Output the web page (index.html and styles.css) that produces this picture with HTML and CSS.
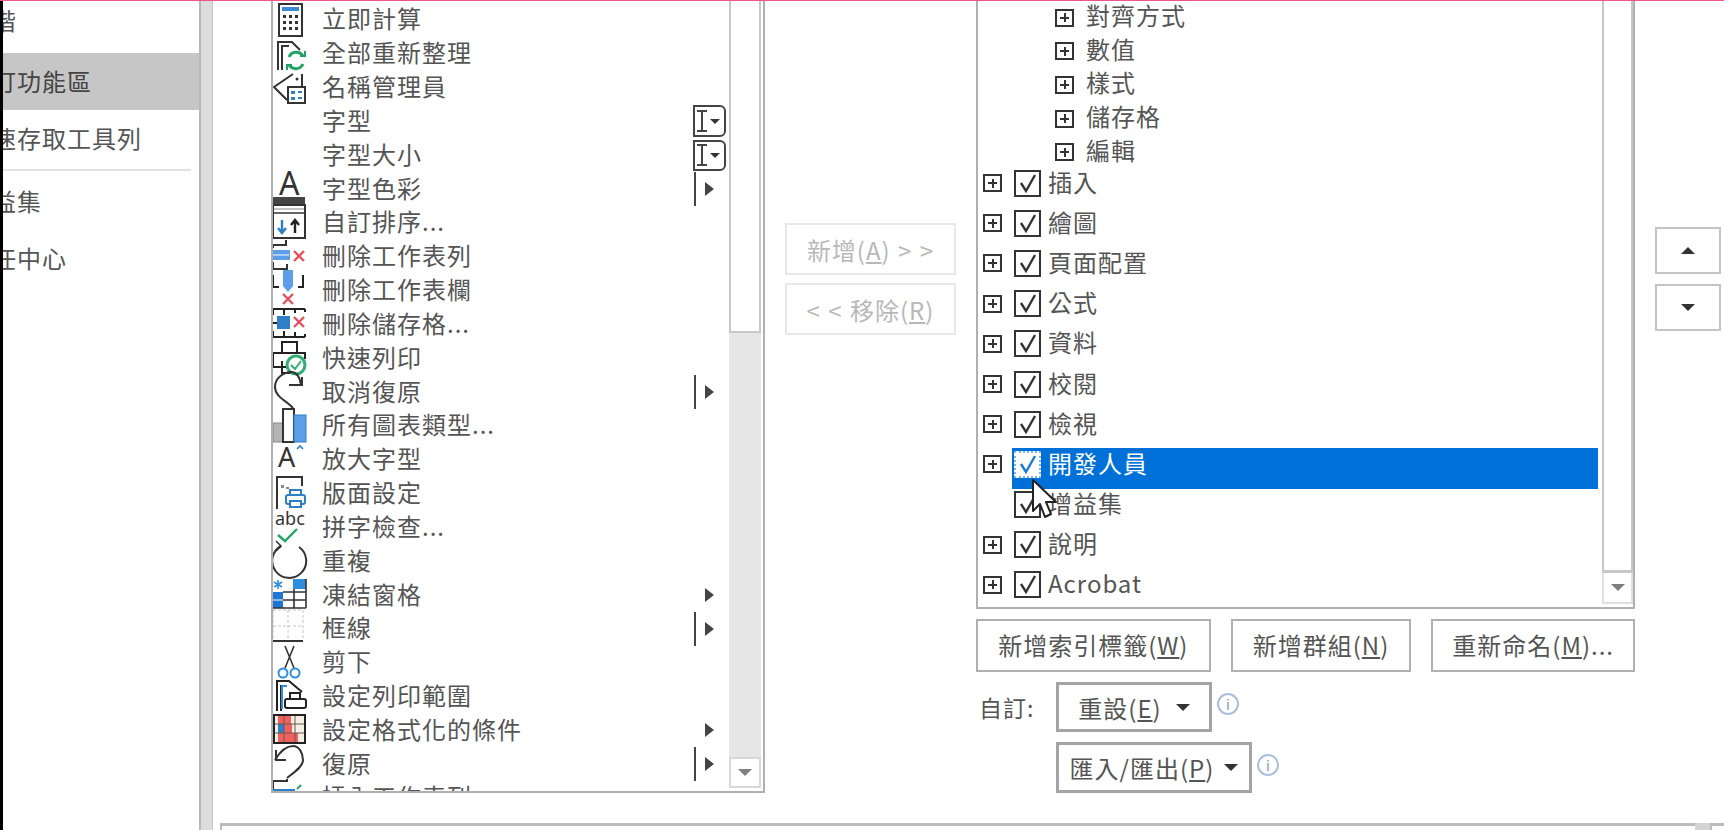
FILE: index.html
```html
<!DOCTYPE html>
<html lang="zh-Hant">
<head>
    <meta charset="UTF-8">
    <title>Excel 選項 - 自訂功能區</title>
    <link rel="stylesheet" href="styles.css">
</head>
<body>
    <svg class="defs" width="0" height="0">
        <symbol id="check" viewBox="0 0 23 23"><path d="M5 11 L10 19 L19 3" fill="none" stroke="currentColor" stroke-width="2.4"/></symbol>
        <symbol id="red-x" viewBox="0 0 12 12"><path d="M1 1 L11 11 M11 1 L1 11" fill="none" stroke="#e8505f" stroke-width="2.4"/></symbol>
    </svg>

    <div class="app">
        <div class="edge"></div>

        <nav class="sidebar">
            <div class="side-item first">進階</div>
            <div class="side-item selected">自訂功能區</div>
            <div class="side-item">快速存取工具列</div>
            <div class="side-sep"></div>
            <div class="side-item">增益集</div>
            <div class="side-item">信任中心</div>
        </nav>
        <div class="divider"></div>

        <main class="main">
            <div class="columns">
                <section class="list-box">
                    <div class="list-rows">
                        <div class="cmd"><svg class="ico" width="40" height="34"><rect x="6" y="1" width="23" height="32" fill="#fff" stroke="#333" stroke-width="2"/><rect x="9" y="4" width="17" height="4" fill="#3d8bd4"/><path d="M10 12h3v3h-3zM16 12h3v3h-3zM22 12h3v3h-3zM10 18h3v3h-3zM16 18h3v3h-3zM22 18h3v3h-3zM10 24h3v3h-3zM16 24h3v3h-3zM22 24h3v3h-3z" fill="#333"/></svg><span>立即計算</span></div>
                        <div class="cmd"><svg class="ico" width="40" height="34"><path d="M5 33 V5 H19 L27 13 M9 33 V9 H16" fill="none" stroke="#333" stroke-width="2"/><path d="M16 20 A8 8 0 0 1 30 19 M30 27 A8 8 0 0 1 16 28" fill="none" stroke="#21a366" stroke-width="3"/><path d="M27 19 H32 V14 M19 28 H14 V33" fill="none" stroke="#21a366" stroke-width="2"/></svg><span>全部重新整理</span></div>
                        <div class="cmd"><svg class="ico" width="40" height="34"><path d="M20 3 L1 16 L14 29 M29 3 V16" fill="none" stroke="#333" stroke-width="2"/><circle cx="24" cy="8" r="1.5" fill="#333"/><rect x="15" y="16" width="17" height="16" fill="#fff" stroke="#333" stroke-width="2"/><path d="M18 20h4v3h-4zM25 20h4v2h-4zM18 26h4v3h-4zM25 26h4v2h-4z" fill="#2f7fc8"/></svg><span>名稱管理員</span></div>
                        <div class="cmd"><div class="ico"></div><span>字型</span><div class="combo"><i class="ibeam"></i><i class="tri-down"></i></div></div>
                        <div class="cmd"><div class="ico"></div><span>字型大小</span><div class="combo second"><i class="ibeam"></i><i class="tri-down"></i></div></div>
                        <div class="cmd"><svg class="ico" width="40" height="34"><text x="6" y="23" class="ico-text" font-size="32">A</text></svg><span>字型色彩</span><div class="marker line"><i class="tri-right"></i></div></div>
                        <div class="cmd"><svg class="ico" width="40" height="34"><rect x="0" y="-9" width="32" height="9" fill="#444"/><rect x="0" y="-1" width="32" height="33" fill="#fff" stroke="#333" stroke-width="2"/><path d="M1 3 H31" stroke="#888" stroke-width="1"/><path d="M1 7 H31" stroke="#333" stroke-width="1.5"/><path d="M9 14 V26 M5 22 L9 27 L13 22" fill="none" stroke="#2f7fc8" stroke-width="2.4"/><path d="M22 27 V15 M18 19 L22 14 L26 19" fill="none" stroke="#222" stroke-width="2.4"/></svg><span>自訂排序...</span></div>
                        <div class="cmd"><svg class="ico" width="40" height="34"><path d="M0 8 V5 H13 V0 M0 22 V29 H14 V24" fill="none" stroke="#333" stroke-width="2"/><rect x="-1" y="10" width="18" height="10" fill="#5c9fe8"/><path d="M0 15 H16" stroke="#fff" stroke-width="1"/><use href="#red-x" x="20" y="10" width="12" height="12"/></svg><span>刪除工作表列</span></div>
                        <div class="cmd"><svg class="ico" width="40" height="34"><path d="M0 1 V13 H6 M30 1 V13 H25" fill="none" stroke="#222" stroke-width="2"/><path d="M10 -4 H20 V12 L15 18 L10 12 Z" fill="#5c9fe8"/><use href="#red-x" x="9" y="19" width="12" height="12"/></svg><span>刪除工作表欄</span></div>
                        <div class="cmd"><svg class="ico" width="40" height="34"><path d="M0 2 H32 M0 16 H8 M0 30 H32 M0 2 V8 M0 24 V30 M11 2 V8 M11 24 V30 M22 2 V6 M22 25 V30 M32 2 V5 M32 27 V30" fill="none" stroke="#222" stroke-width="2"/><rect x="4" y="9" width="13" height="13" fill="#2f7fc8"/><use href="#red-x" x="20" y="9" width="12" height="12"/></svg><span>刪除儲存格...</span></div>
                        <div class="cmd"><svg class="ico" width="40" height="34"><path d="M9 11 V1 H24 V11" fill="#fff" stroke="#222" stroke-width="2"/><path d="M16 26 H0 V12 H32 V18" fill="#fff" stroke="#222" stroke-width="2"/><path d="M9 20 V32 H20" fill="none" stroke="#222" stroke-width="2"/><circle cx="23" cy="24" r="9" fill="#fff" stroke="#2fae74" stroke-width="3"/><path d="M18 24 L22 28 L28 20" fill="none" stroke="#2fae74" stroke-width="2"/></svg><span>快速列印</span></div>
                        <div class="cmd"><svg class="ico" width="40" height="34"><path d="M20 33 C14 26 2 22 2 12 C2 2 12 -3 18 -3 C24 -3 27 3 28 10 M16 10 H29 V2" fill="none" stroke="#333" stroke-width="2"/></svg><span>取消復原</span><div class="marker line"><i class="tri-right"></i></div></div>
                        <div class="cmd"><svg class="ico" width="40" height="34"><rect x="0" y="14" width="10" height="19" fill="#b5b5b5" stroke="#888" stroke-width="1"/><rect x="10" y="0" width="11" height="33" fill="#fff" stroke="#333" stroke-width="2"/><rect x="21" y="6" width="12" height="27" fill="#5c9fe8" stroke="#2f7fc8" stroke-width="1"/></svg><span>所有圖表類型...</span></div>
                        <div class="cmd"><svg class="ico" width="40" height="34"><text x="5" y="24" class="ico-text" font-size="27">A</text><path d="M24 6 L27 3 L30 6" fill="none" stroke="#2f7fc8" stroke-width="1.6"/></svg><span>放大字型</span></div>
                        <div class="cmd"><svg class="ico" width="40" height="34"><path d="M4 32 V0 H29 V9" fill="none" stroke="#333" stroke-width="2"/><path d="M8 8h3v3h-3zM13 10h3v2h-3z" fill="#888"/><rect x="17" y="13" width="11" height="6" fill="#fff" stroke="#2f7fc8" stroke-width="2"/><rect x="13" y="18" width="19" height="9" rx="2" fill="#fff" stroke="#2f7fc8" stroke-width="2"/><rect x="17" y="24" width="11" height="6" fill="#fff" stroke="#2f7fc8" stroke-width="2"/></svg><span>版面設定</span></div>
                        <div class="cmd"><svg class="ico" width="40" height="34"><text x="2" y="15" class="ico-text" font-size="18">abc</text><path d="M5 25 L12 31 L24 19" fill="none" stroke="#21a366" stroke-width="2.4"/></svg><span>拼字檢查...</span></div>
                        <div class="cmd"><svg class="ico" width="40" height="34"><path d="M8 2 A17 17 0 1 0 26 3" fill="none" stroke="#333" stroke-width="2"/><path d="M3 -3 L8 2 L3 7" fill="none" stroke="#333" stroke-width="1.5"/></svg><span>重複</span></div>
                        <div class="cmd"><svg class="ico" width="40" height="34"><rect x="20" y="1" width="13" height="10" fill="#2f8ee0"/><rect x="0" y="14" width="10" height="16" fill="#1d76d2"/><path d="M10 14 H33 M10 22 H33 M0 30 H33 M21 11 V30 M33 1 V30" fill="none" stroke="#333" stroke-width="1.6"/><path d="M0 22 H10" stroke="#fff" stroke-width="1"/><path d="M5 2 V11 M1 4 L9 9 M9 4 L1 9" stroke="#2f8ee0" stroke-width="1.6"/></svg><span>凍結窗格</span><div class="marker"><i class="tri-right"></i></div></div>
                        <div class="cmd"><svg class="ico" width="40" height="34"><path d="M0 -2 H30 M0 14 H30 M0 -2 V28 M15 -2 V28 M30 -2 V28" fill="none" stroke="#c4c4c4" stroke-width="1" stroke-dasharray="3 2"/><path d="M0 29 H30" stroke="#333" stroke-width="2"/></svg><span>框線</span><div class="marker line"><i class="tri-right"></i></div></div>
                        <div class="cmd"><svg class="ico" width="40" height="34"><path d="M12 0 L21 22 M21 0 L12 22" fill="none" stroke="#333" stroke-width="1.6"/><circle cx="10" cy="27" r="4.5" fill="none" stroke="#2f8ee0" stroke-width="2"/><circle cx="22" cy="27" r="4.5" fill="none" stroke="#2f8ee0" stroke-width="2"/></svg><span>剪下</span></div>
                        <div class="cmd"><svg class="ico" width="40" height="34"><path d="M4 31 V1 H16 L29 12 M8 31 V5" fill="none" stroke="#222" stroke-width="2"/><path d="M9 29 V6 H14" fill="none" stroke="#2f8ee0" stroke-width="2"/><rect x="17" y="13" width="10" height="7" fill="#fff" stroke="#222" stroke-width="2"/><rect x="12" y="19" width="21" height="9" rx="2" fill="#fff" stroke="#222" stroke-width="2"/></svg><span>設定列印範圍</span></div>
                        <div class="cmd"><svg class="ico" width="40" height="34"><rect x="1" y="2" width="31" height="28" fill="#f6efe4"/><rect x="5" y="2" width="13" height="9" fill="#f0605f"/><rect x="5" y="11" width="6" height="9" fill="#2f7fc8"/><rect x="11" y="11" width="8" height="9" fill="#f0605f"/><rect x="5" y="20" width="20" height="9" fill="#f0605f"/><path d="M11 2 V30 M22 2 V30 M1 11 H32 M1 20 H32" fill="none" stroke="#6a5a4a" stroke-width="1"/><rect x="1" y="2" width="31" height="28" fill="none" stroke="#222" stroke-width="2"/></svg><span>設定格式化的條件</span><div class="marker"><i class="tri-right"></i></div></div>
                        <div class="cmd"><svg class="ico" width="40" height="34"><path d="M2 13 C8 3 14 -1 20 -1 C26 -1 30 6 30 13 C30 20 20 26 14 31 M3 3 V13 H13" fill="none" stroke="#333" stroke-width="2"/></svg><span>復原</span><div class="marker line"><i class="tri-right"></i></div></div>
                        <div class="cmd"><svg class="ico" width="40" height="34"><path d="M0 0 H14 V-2 M0 0 V10" fill="none" stroke="#333" stroke-width="2"/><rect x="0" y="8" width="22" height="4" fill="#2f7fc8"/><path d="M24 8 L28 4" stroke="#21a366" stroke-width="2"/></svg><span>插入工作表列</span></div>
                    </div>
                    <div class="scrollbar">
                        <div class="list-thumb"></div>
                        <div class="list-track"></div>
                        <div class="scroll-btn"><i class="tri-down gray"></i></div>
                    </div>
                </section>

                <section class="move-col">
                    <button class="move-btn">新增(<u>A</u>) &gt; &gt;</button>
                    <button class="move-btn">&lt; &lt; 移除(<u>R</u>)</button>
                </section>

                <section class="tree-col">
                    <div class="tree-box">
                        <div class="tree-rows">
                            <div class="sub-group">
                                <div class="sub-row"><i class="plus"></i><span>對齊方式</span></div>
                                <div class="sub-row"><i class="plus"></i><span>數值</span></div>
                                <div class="sub-row"><i class="plus"></i><span>樣式</span></div>
                                <div class="sub-row"><i class="plus"></i><span>儲存格</span></div>
                                <div class="sub-row"><i class="plus"></i><span>編輯</span></div>
                            </div>
                            <div class="tab-row"><i class="plus"></i><div class="tab-body"><div class="box"><svg><use href="#check"/></svg></div><span>插入</span></div></div>
                            <div class="tab-row"><i class="plus"></i><div class="tab-body"><div class="box"><svg><use href="#check"/></svg></div><span>繪圖</span></div></div>
                            <div class="tab-row"><i class="plus"></i><div class="tab-body"><div class="box"><svg><use href="#check"/></svg></div><span>頁面配置</span></div></div>
                            <div class="tab-row"><i class="plus"></i><div class="tab-body"><div class="box"><svg><use href="#check"/></svg></div><span>公式</span></div></div>
                            <div class="tab-row"><i class="plus"></i><div class="tab-body"><div class="box"><svg><use href="#check"/></svg></div><span>資料</span></div></div>
                            <div class="tab-row"><i class="plus"></i><div class="tab-body"><div class="box"><svg><use href="#check"/></svg></div><span>校閱</span></div></div>
                            <div class="tab-row"><i class="plus"></i><div class="tab-body"><div class="box"><svg><use href="#check"/></svg></div><span>檢視</span></div></div>
                            <div class="tab-row"><i class="plus"></i><div class="tab-body selected"><div class="box"><svg><use href="#check"/></svg></div><span>開發人員</span></div></div>
                            <div class="tab-row"><i class="plus none"></i><div class="tab-body"><div class="box"><svg><use href="#check"/></svg></div><span>增益集</span></div></div>
                            <div class="tab-row"><i class="plus"></i><div class="tab-body"><div class="box"><svg><use href="#check"/></svg></div><span>說明</span></div></div>
                            <div class="tab-row"><i class="plus"></i><div class="tab-body"><div class="box"><svg><use href="#check"/></svg></div><span>Acrobat</span></div></div>
                        </div>
                        <div class="tree-scroll">
                            <div class="tree-thumb"></div>
                            <div class="tree-down"><i class="tri-down gray"></i></div>
                        </div>
                    </div>

                    <div class="tree-buttons">
                        <button class="btn w-tab">新增索引標籤(<u>W</u>)</button>
                        <button class="btn w-group">新增群組(<u>N</u>)</button>
                        <button class="btn w-rename">重新命名(<u>M</u>)...</button>
                    </div>

                    <div class="custom-row">
                        <label class="custom-label">自訂:</label>
                        <button class="drop w-reset"><span>重設(<u>E</u>)</span><i class="tri-down"></i></button>
                        <span class="info">i</span>
                    </div>
                    <div class="custom-row indent">
                        <button class="drop w-import"><span>匯入/匯出(<u>P</u>)</span><i class="tri-down"></i></button>
                        <span class="info">i</span>
                    </div>
                </section>

                <section class="order-col">
                    <button class="order-btn"><i class="tri-up"></i></button>
                    <button class="order-btn"><i class="tri-down"></i></button>
                </section>
            </div>

            <div class="bottom-bar">
                <div class="bottom-field"></div>
                <div class="bottom-scroll"></div>
                <div class="bottom-end"></div>
            </div>
        </main>
    </div>

    <!-- mouse pointer -->
    <svg class="cursor" width="30" height="42" viewBox="0 0 30 42"><path d="M2 1 V32 L9 25 L14 38 L20 35 L15 23 L25 23 Z" fill="#fff" stroke="#222" stroke-width="2" stroke-linejoin="round"/></svg>
</body>
</html>
```

FILE: styles.css
```css
* {
    box-sizing: border-box;
}
html, body {
    margin: 0;
    height: 830px;
    overflow: hidden;
}
body {
    font-family: "Noto Sans CJK TC", "Noto Sans", sans-serif;
    font-size: 24px;
    letter-spacing: 1px;
    color: #555;
    background: #fff;
}
.defs {
    position: absolute;
}
u {
    text-underline-offset: 2px;
}
i {
    display: block;
    font-style: normal;
}

.app {
    display: flex;
    height: 830px;
    border-top: 1px solid #f0548c;
}
.edge {
    width: 3px;
    background: #000;
}

/* left nav */
.sidebar {
    width: 196px;
    overflow: hidden;
    white-space: nowrap;
}
.side-item {
    height: 57px;
    line-height: 55px;
    text-indent: -36px;
}
.side-item.first {
    height: 40px;
    line-height: 38px;
    margin-bottom: 12px;
}
.side-item.selected {
    background: #c6c6c6;
    color: #444;
}
.side-sep {
    height: 2px;
    margin: 2px 8px 2px 0;
    background: #e2e2e2;
}
.divider {
    width: 14px;
    background: #dcdcdc;
    border-left: 2px solid #b8b8b8;
    border-right: 1px solid #c4c4c4;
}

.main {
    flex: 1;
    display: flex;
    flex-direction: column;
    min-width: 0;
}
.columns {
    display: flex;
    gap: 20px;
    height: 822px;
    padding-left: 58px;
}

/* command list */
.list-box {
    display: flex;
    width: 494px;
    height: 792px;
    border-left: 2px solid #b0b0b0;
    border-right: 2px solid #b0b0b0;
    border-bottom: 2px solid #b0b0b0;
}
.list-rows {
    width: 458px;
    height: 790px;
    padding-top: 2px;
    overflow: hidden;
}
.cmd {
    display: flex;
    align-items: center;
    height: 33.83px;
    white-space: nowrap;
}
.cmd span {
    padding-bottom: 4px;
}
.ico {
    flex: none;
    align-self: flex-start;
    display: block;
    width: 49px;
    overflow: visible;
}
.ico-text {
    font-family: "Noto Sans", sans-serif;
    fill: #333;
    letter-spacing: 0;
}
.combo {
    display: flex;
    align-items: center;
    justify-content: space-between;
    width: 33px;
    height: 32px;
    margin-left: auto;
    margin-right: 3px;
    padding: 0 4px 0 2px;
    background: #fff;
    border: 2px solid #444;
    border-radius: 0 6px 6px 0;
}
.combo.second {
    height: 31px;
}
.ibeam {
    width: 10px;
    height: 22px;
    border-top: 2px solid #444;
    border-bottom: 2px solid #444;
    background: linear-gradient(#444, #444) center / 2px 100% no-repeat;
}
.marker {
    display: flex;
    align-items: center;
    justify-content: flex-end;
    width: 32px;
    height: 34px;
    margin-left: auto;
    margin-right: 15px;
}
.marker.line {
    border-left: 2px solid #444;
    width: 20px;
}
.tri-right {
    border-left: 9px solid #444;
    border-top: 7px solid transparent;
    border-bottom: 7px solid transparent;
}
.tri-down {
    border-top: 7px solid #333;
    border-left: 7px solid transparent;
    border-right: 7px solid transparent;
}
.tri-down.gray {
    border-top-color: #7f7f7f;
}
.tri-up {
    border-bottom: 7px solid #333;
    border-left: 7px solid transparent;
    border-right: 7px solid transparent;
}
.combo .tri-down {
    border-top-width: 5px;
    border-left-width: 5px;
    border-right-width: 5px;
}

.scrollbar {
    display: flex;
    flex-direction: column;
    width: 34px;
    height: 790px;
    padding-bottom: 3px;
}
.list-thumb {
    height: 332px;
    margin-right: 2px;
    background: #fff;
    border: 2px solid #c8c8c8;
    border-top: 0;
}
.list-track {
    flex: 1;
    margin-right: 2px;
    background: #e6e6e6;
}
.scroll-btn {
    display: flex;
    align-items: center;
    justify-content: center;
    height: 31px;
    margin-right: 2px;
    border: 2px solid #d8d8d8;
}

/* add / remove */
.move-col {
    display: flex;
    flex-direction: column;
    gap: 8px;
    width: 171px;
    padding-top: 222px;
}
.move-btn {
    height: 52px;
    padding: 0;
    font: inherit;
    letter-spacing: 1px;
    word-spacing: 1px;
    color: #b8b8b8;
    background: #fff;
    border: 2px solid #e8e8e8;
}

/* tab tree */
.tree-col {
    width: 659px;
}
.tree-box {
    display: flex;
    height: 608px;
    border-left: 2px solid #b0b0b0;
    border-right: 2px solid #b0b0b0;
    border-bottom: 2px solid #b0b0b0;
}
.tree-rows {
    flex: 1;
    min-width: 0;
    padding-left: 5px;
}
.sub-group {
    height: 162px;
}
.sub-row {
    display: flex;
    align-items: center;
    gap: 12px;
    height: 33.6px;
    padding-left: 72px;
}
.sub-row span {
    padding-bottom: 6px;
}
.tab-row {
    display: flex;
    align-items: center;
    gap: 10px;
    height: 40.2px;
}
.plus {
    flex: none;
    width: 19px;
    height: 18px;
    border: 2px solid #333;
    background:
        linear-gradient(#333, #333) center / 9px 2px no-repeat,
        linear-gradient(#333, #333) center / 2px 9px no-repeat;
}
.plus.none {
    visibility: hidden;
}
.tab-body {
    flex: 1;
    display: flex;
    align-items: center;
    gap: 7px;
    height: 100%;
    margin-right: 4px;
    padding-left: 2px;
}
.tab-body span {
    padding-bottom: 4px;
}
.tab-body.selected {
    color: #fff;
    background: linear-gradient(to bottom, transparent 4px, #0070d9 4px);
    box-shadow: 0 4px 0 #0070d9;
}
.box {
    flex: none;
    width: 27px;
    height: 27px;
    color: #333;
    background: #fff;
    border: 2px solid #333;
}
.box svg {
    display: block;
    width: 23px;
    height: 23px;
}
.selected .box {
    color: #1a78d6;
    border: 2px dotted #7fb4ea;
}
.tree-scroll {
    display: flex;
    flex-direction: column;
    width: 31px;
    height: 603px;
}
.tree-thumb {
    height: 572px;
    border-left: 2px solid #c8c8c8;
    border-right: 2px solid #c8c8c8;
    border-bottom: 3px solid #c8c8c8;
}
.tree-down {
    flex: 1;
    display: flex;
    align-items: center;
    justify-content: center;
    border: 2px solid #e0e0e0;
    border-top: 0;
}

.tree-buttons {
    display: flex;
    gap: 20px;
    margin-top: 10px;
}
.btn {
    height: 53px;
    padding: 0 0 2px;
    font: inherit;
    letter-spacing: 1px;
    color: #555;
    background: #fff;
    border: 2px solid #b0b0b0;
}
.w-tab {
    width: 235px;
}
.w-group {
    width: 181px;
}
.w-rename {
    width: 204px;
}
.custom-row {
    display: flex;
    align-items: center;
    gap: 5px;
    margin-top: 10px;
}
.custom-row.indent {
    padding-left: 80px;
}
.custom-label {
    width: 75px;
    padding-left: 3px;
    font-size: 23px;
}
.drop {
    display: flex;
    align-items: center;
    justify-content: center;
    gap: 14px;
    height: 50px;
    padding: 0;
    font: inherit;
    letter-spacing: 1px;
    white-space: nowrap;
    color: #555;
    background: #fff;
    border: 3px solid #a4a4a4;
}
.w-reset {
    width: 156px;
}
.w-import {
    width: 196px;
    height: 51px;
    gap: 10px;
}
.info {
    width: 22px;
    height: 22px;
    margin-top: -6px;
    font-size: 14px;
    line-height: 18px;
    letter-spacing: 0;
    text-align: center;
    color: #7f9cc4;
    border: 2px solid #a9bfdc;
    border-radius: 50%;
}

/* move up / down */
.order-col {
    display: flex;
    flex-direction: column;
    gap: 10px;
    width: 66px;
    padding-top: 226px;
}
.order-btn {
    display: flex;
    align-items: center;
    justify-content: center;
    height: 47px;
    padding: 0;
    background: #fff;
    border: 2px solid #c4c4c4;
}

.bottom-bar {
    display: flex;
    flex: 1;
    margin-left: 7px;
}
.bottom-field {
    flex: 1;
    border-top: 3px solid #bcbcbc;
    border-left: 2px solid #bcbcbc;
}
.bottom-scroll {
    width: 15px;
    background: #d4d4d4;
}
.bottom-end {
    width: 14px;
    border-top: 3px solid #bcbcbc;
    border-left: 2px solid #bcbcbc;
}

.cursor {
    position: absolute;
    left: 1031px;
    top: 479px;
}
```
